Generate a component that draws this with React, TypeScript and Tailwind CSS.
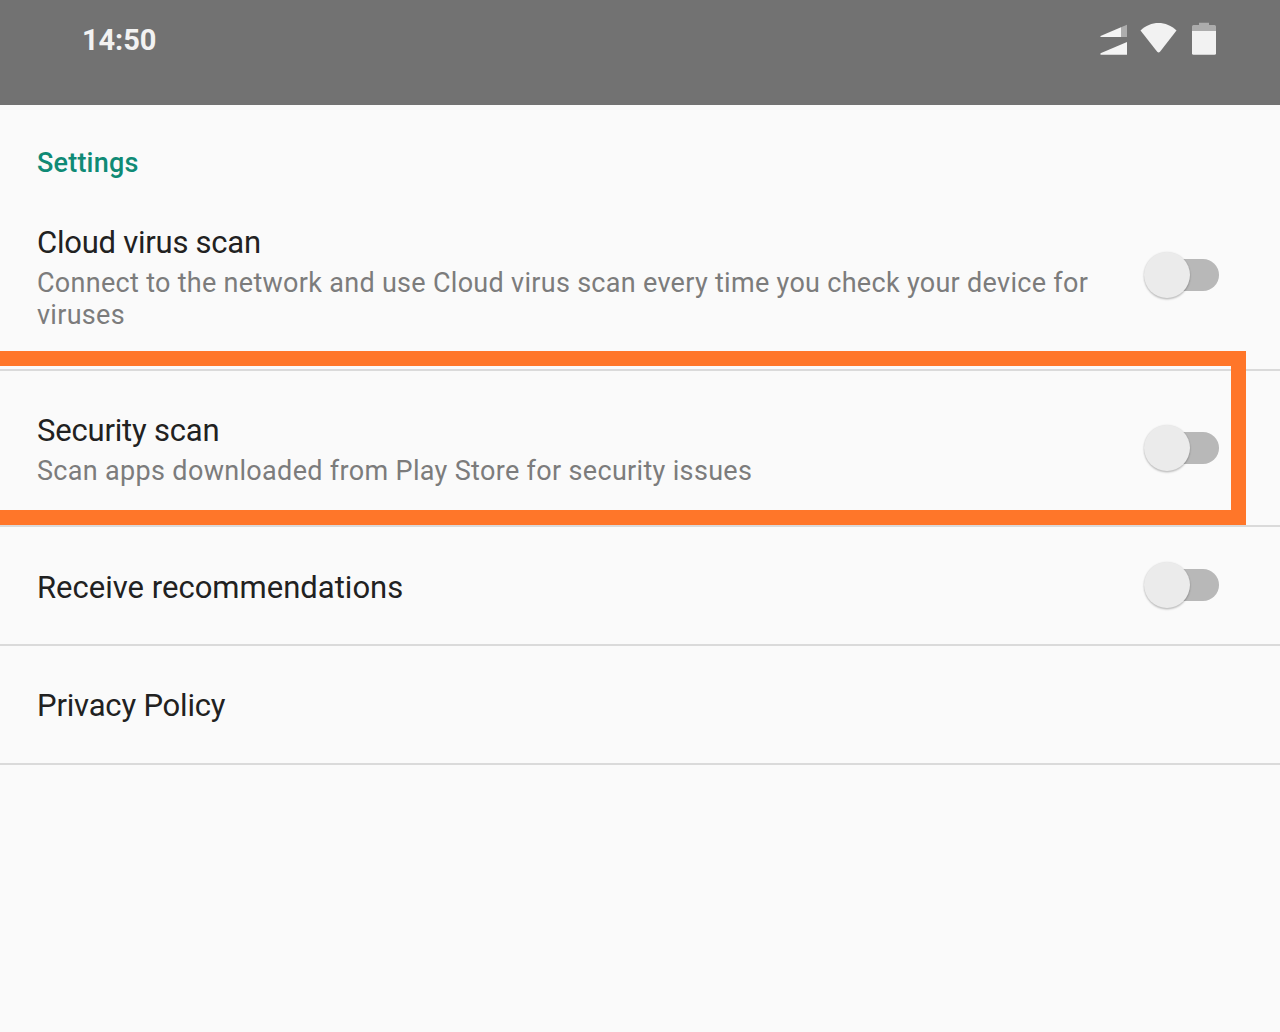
import { useState } from "react";

type SettingRow = {
  title: string;
  summary?: string;
  toggle: boolean;
  layout: string;
  toggleLayout?: string;
  titleSpacing: string;
  summarySpacing?: string;
  highlighted?: boolean;
};

const rows: SettingRow[] = [
  {
    title: "Cloud virus scan",
    summary:
      "Connect to the network and use Cloud virus scan every time you check your device for viruses",
    toggle: true,
    layout: "h-[181px] pt-[33px]",
    toggleLayout: "mt-[29px]",
    titleSpacing: "tracking-[-0.24px]",
    summarySpacing: "tracking-[0.295px]",
  },
  {
    title: "Security scan",
    summary: "Scan apps downloaded from Play Store for security issues",
    toggle: true,
    layout: "h-[156px] pt-[40px]",
    toggleLayout: "mt-[14px]",
    titleSpacing: "tracking-[-0.19px]",
    summarySpacing: "tracking-[0.325px]",
    highlighted: true,
  },
  {
    title: "Receive recommendations",
    toggle: true,
    layout: "h-[119px] pt-[41px]",
    toggleLayout: "-mt-[6px]",
    titleSpacing: "tracking-[0.01px]",
  },
  {
    title: "Privacy Policy",
    toggle: false,
    layout: "h-[119px] pt-[40px]",
    titleSpacing: "tracking-[-0.18px]",
  },
];

function Toggle({ label }: { label: string }) {
  const [on, setOn] = useState(false);
  return (
    <button
      type="button"
      role="switch"
      aria-checked={on}
      aria-label={label}
      onClick={() => setOn(!on)}
      className={`flex h-[46px] w-[75px] shrink-0 items-start rounded-full ${on ? "flex-row-reverse" : ""}`}
    >
      <span className="relative z-10 size-[46px] shrink-0 rounded-full bg-[#ebebeb] shadow-[0_1.5px_2px_rgba(0,0,0,0.22),0_0_2px_rgba(0,0,0,0.1)]" />
      <span className={`mt-[6.5px] h-[32px] w-[52px] shrink-0 rounded-full ${on ? "-mr-[23px] bg-[#80c4bc]" : "-ml-[23px] bg-[#b8b8b8]"}`} />
    </button>
  );
}

function StatusBar() {
  return (
    <header className="flex h-[105px] items-start justify-between bg-[#727272] pr-[62px] pl-[82px] text-[#f2f2f2]">
      <span className="mt-[24px] text-[29px] leading-8 font-bold tracking-[-0.1px]">14:50</span>
      <div className="mt-[22px] flex items-start">
        <svg width="28" height="34" viewBox="0 0 28 34">
          <path d="M0.5 15V14L21 5.3V15Z" fill="#f4f4f4" />
          <path d="M21 5.3L27 2.8V15H21Z" fill="#adadad" />
          <path d="M0.5 32.7V31.2L27 20V32.7Z" fill="#f4f4f4" />
        </svg>
        <svg className="ml-[12px]" width="38" height="34" viewBox="0 0 38 34">
          <path d="M0.5 8.6C5.5 3.5 12 1 18.5 1S31.5 3.5 36.5 8.6L20 29.8Q18.6 31.4 17.2 29.8Z" fill="#f2f2f2" />
        </svg>
        <svg className="ml-[14px]" width="26" height="34" viewBox="0 0 26 34">
          <path d="M0 9V4.5Q0 3 1.5 3H7V0.7H17V3H22.5Q24 3 24 4.5V9Z" fill="#acacac" />
          <path d="M0 9H24V31.3Q24 32.8 22.5 32.8H1.5Q0 32.8 0 31.3Z" fill="#f2f2f2" />
        </svg>
      </div>
    </header>
  );
}

export default function App() {
  return (
    <div className="h-[1032px] w-[1280px] overflow-hidden bg-[#fafafa] font-['Roboto',sans-serif]">
      <StatusBar />
      <main>
        <h1 className="h-[85px] pt-[42px] pl-[37px] text-[27px] leading-8 font-medium tracking-[0.2px] text-[#0f8a75]">
          <span>Settings</span>
        </h1>
        {rows.map((row) => (
          <section
            key={row.title}
            className={`relative flex items-start justify-between border-b-2 border-[#dadada] pr-[61px] pl-[37px] ${row.layout}`}
          >
            <div className="w-[1070px]">
              <h2 className={`text-[31px] leading-10 text-[#212121] ${row.titleSpacing}`}>
                <span>{row.title}</span>
              </h2>
              {row.summary && (
                <p className={`mt-1 text-[27px] leading-8 text-[#7c7c7c] ${row.summarySpacing}`}>
                  <span>{row.summary}</span>
                </p>
              )}
            </div>
            {row.toggle && (
              <div className={row.toggleLayout}>
                <Toggle label={row.title} />
              </div>
            )}
            {row.highlighted && (
              <div className="pointer-events-none absolute -top-5 left-0 z-20 h-[174px] w-[1246px] border-y-[15px] border-r-[15px] border-[#ff7629]" />
            )}
          </section>
        ))}
      </main>
    </div>
  );
}
